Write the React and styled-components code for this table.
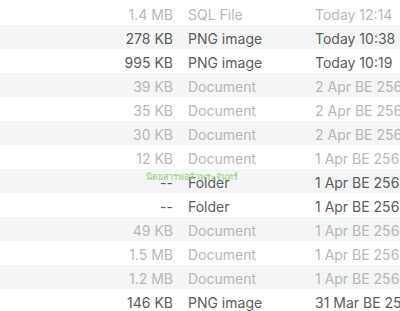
import React from "react";
import styled, { createGlobalStyle } from "styled-components";

const Global = createGlobalStyle`
  html, body { margin: 0; padding: 0; background: #ffffff; }
  body { font-family: Inter, "Noto Sans", "Liberation Sans", sans-serif; overflow: hidden; }
`;

const Page = styled.div`
  position: relative;
  width: 400px;
  height: 311px;
  overflow: hidden;
  padding-top: 1px;
  box-sizing: border-box;
`;

const Row = styled.div`
  display: grid;
  grid-template-columns: 173px 112px 1fr;
  column-gap: 15px;
  align-items: center;
  height: 24px;
  padding-top: 3px;
  box-sizing: border-box;
  background: ${(p) => (p.$striped ? "#f4f5f5" : "#ffffff")};
  color: ${(p) => (p.$dim ? "#b8b8b8" : "#5c5c5c")};
  font-size: 14px;
  white-space: nowrap;
`;

const Size = styled.span`
  text-align: right;
`;

const Cell = styled.span`
  overflow: visible;
`;

const Watermark = styled.div`
  position: absolute;
  left: 146px;
  top: 170px;
  font-family: "Noto Sans", sans-serif;
  font-size: 9px;
  color: #9dca7d;
  white-space: nowrap;
  pointer-events: none;
`;

const rows = [
  ["1.4 MB", "SQL File", "Today 12:14", true],
  ["278 KB", "PNG image", "Today 10:38", false],
  ["995 KB", "PNG image", "Today 10:19", false],
  ["39 KB", "Document", "2 Apr BE 2568 at 16:02", true],
  ["35 KB", "Document", "2 Apr BE 2568 at 15:47", true],
  ["30 KB", "Document", "2 Apr BE 2568 at 15:20", true],
  ["12 KB", "Document", "1 Apr BE 2568 at 18:11", true],
  ["--", "Folder", "1 Apr BE 2568 at 17:05", false],
  ["--", "Folder", "1 Apr BE 2568 at 16:44", false],
  ["49 KB", "Document", "1 Apr BE 2568 at 14:30", true],
  ["1.5 MB", "Document", "1 Apr BE 2568 at 13:12", true],
  ["1.2 MB", "Document", "1 Apr BE 2568 at 11:08", true],
  ["146 KB", "PNG image", "31 Mar BE 2568 at 20:15", false],
];

export default function App() {
  return (
    <>
      <Global />
      <Page>
        {rows.map(([size, kind, date, dim], i) => (
          <Row key={i} $striped={i % 2 === 1} $dim={dim}>
            <Size>{size}</Size>
            <Cell>{kind}</Cell>
            <Cell>{date}</Cell>
          </Row>
        ))}
        <Watermark>นิตยสารพ่อค้าพระจันทร์</Watermark>
      </Page>
    </>
  );
}
